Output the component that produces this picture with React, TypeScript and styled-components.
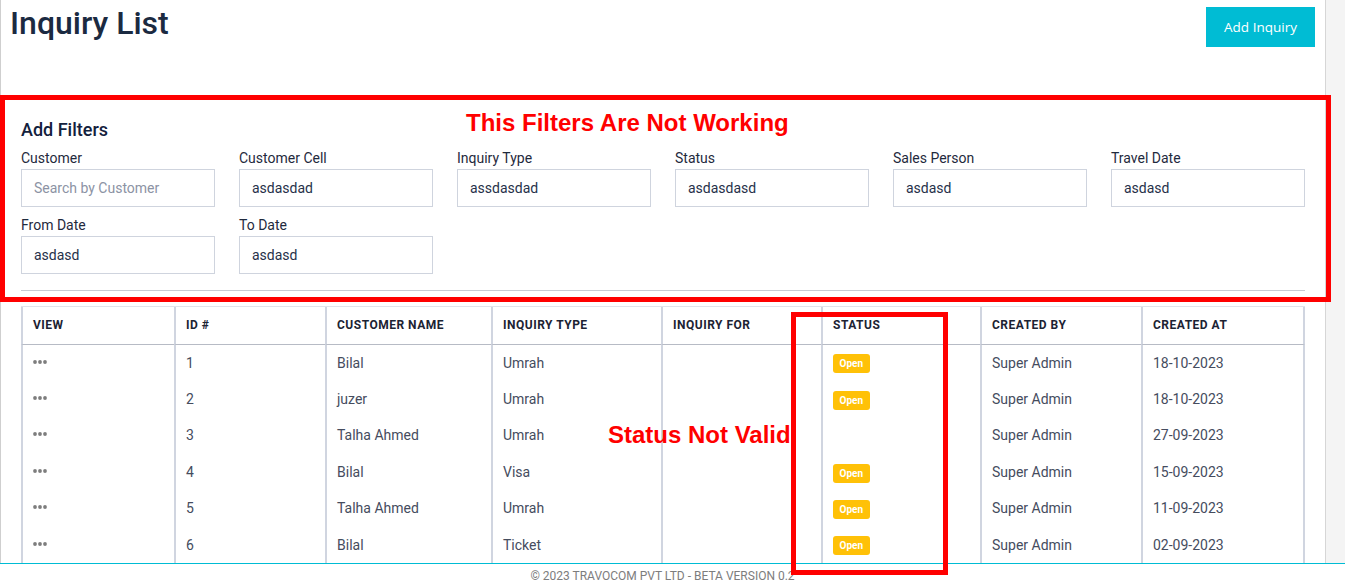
import React from "react";
import styled, { createGlobalStyle } from "styled-components";

const GlobalStyle = createGlobalStyle`
  html, body { margin: 0; padding: 0; background: #fff; }
  body { font-family: Roboto, "Noto Sans", Arial, sans-serif; }
  *, *::before, *::after { box-sizing: border-box; }
`;

const Page = styled.div`
  position: relative;
  width: 1345px;
`;

const Body = styled.div`
  display: flex;
  align-items: stretch;
`;

const Panel = styled.main`
  width: 1326px;
  background: #fff;
  border-left: 1px solid #cfcfcf;
  border-right: 1px solid #d6d6d6;
`;

const Gutter = styled.div`
  flex: 1;
  background: #f4f4f4;
`;

const Header = styled.header`
  display: flex;
  justify-content: space-between;
  align-items: flex-start;
  height: 97px;
  padding: 4px 10px 0 9px;
`;

const Title = styled.h1`
  margin: 0;
  font-size: 32px;
  line-height: 38px;
  font-weight: 500;
  color: #1b2a41;
`;

const PrimaryButton = styled.button`
  margin-top: 3px;
  height: 40px;
  width: 109px;
  padding: 0;
  border: none;
  background: #00bcd4;
  color: #fff;
  font-family: "Open Sans", Arial, sans-serif;
  font-size: 13.5px;
  cursor: pointer;
`;

const Filters = styled.section`
  padding: 22px 20px 0 20px;
`;

const FilterTitle = styled.h2`
  margin: 0 0 7px;
  font-size: 18px;
  line-height: 21.6px;
  font-weight: 500;
  color: #13213d;
`;

const FilterGrid = styled.div`
  display: grid;
  grid-template-columns: repeat(6, 194px);
  column-gap: 24px;
  row-gap: 8px;
`;

const Field = styled.label`
  display: flex;
  flex-direction: column;
`;

const FieldLabel = styled.span`
  font-size: 14px;
  line-height: 21px;
  color: #1f2a3d;
`;

const TextInput = styled.input`
  width: 100%;
  height: 38px;
  padding: 0 12px;
  border: 1px solid #cfd4de;
  border-radius: 0;
  font-family: Roboto, Arial, sans-serif;
  font-size: 14px;
  color: #27314a;
  background: #fff;
  outline: none;
  &::placeholder { color: #8c93a4; }
`;

const Divider = styled.hr`
  margin: 16px 0 15px;
  border: 0;
  border-top: 1px solid #c7cbd4;
`;

const TableWrap = styled.section`
  padding: 0 20px;
`;

const Table = styled.table`
  width: 1284px;
  border-collapse: separate;
  border-spacing: 0;
  table-layout: fixed;
  border-top: 1px solid #e0e3ea;
`;

const Th = styled.th<{ $w: number }>`
  width: ${(p) => p.$w}px;
  padding: 11.5px 10px;
  text-align: left;
  font-size: 12px;
  line-height: 14.06px;
  font-weight: 700;
  letter-spacing: 0.5px;
  text-transform: uppercase;
  color: #1c2333;
  border-left: 2px solid #d0d5e0;
  border-bottom: 1px solid #b7bbc5;
  &:last-child { border-right: 2px solid #d0d5e0; }
`;

const Td = styled.td`
  padding: 10px 10px;
  font-size: 14px;
  line-height: 16.4px;
  color: #454c5e;
  border-left: 2px solid #d0d5e0;
  white-space: nowrap;
  &:last-child { border-right: 2px solid #d0d5e0; }
`;

const Dots = styled.svg`
  width: 14px;
  height: 4px;
  vertical-align: 4px;
  fill: #7d7d7d;
`;

const Badge = styled.span`
  display: inline-block;
  height: 19px;
  margin: -3px 0;
  padding: 0 6.5px;
  line-height: 19px;
  font-size: 10px;
  font-weight: 700;
  color: #fff;
  background: #ffc107;
  border-radius: 3px;
  vertical-align: middle;
`;

const Footer = styled.footer`
  border-top: 1px solid #00bcd4;
  padding: 3px 20px 0 0;
  text-align: center;
  font-size: 12px;
  line-height: 18px;
  color: #7d7d7d;
  background: #fff;
`;

const MarkBox = styled.div<{ $x: number; $y: number; $w: number; $h: number }>`
  position: absolute;
  left: ${(p) => p.$x}px;
  top: ${(p) => p.$y}px;
  width: ${(p) => p.$w}px;
  height: ${(p) => p.$h}px;
  border: 5px solid #ff0000;
  pointer-events: none;
`;

const MarkText = styled.div<{ $x: number; $y: number }>`
  position: absolute;
  left: ${(p) => p.$x}px;
  top: ${(p) => p.$y}px;
  font-family: "Liberation Sans", Arial, sans-serif;
  font-weight: 700;
  font-size: 24px;
  line-height: 24px;
  color: #ff0000;
  white-space: nowrap;
  pointer-events: none;
`;

const filters: { label: string; value?: string; placeholder?: string }[] = [
  { label: "Customer", placeholder: "Search by Customer" },
  { label: "Customer Cell", value: "asdasdad" },
  { label: "Inquiry Type", value: "assdasdad" },
  { label: "Status", value: "asdasdasd" },
  { label: "Sales Person", value: "asdasd" },
  { label: "Travel Date", value: "asdasd" },
  { label: "From Date", value: "asdasd" },
  { label: "To Date", value: "asdasd" },
];

const columns: { title: string; w: number }[] = [
  { title: "View", w: 153 },
  { title: "ID #", w: 151 },
  { title: "Customer Name", w: 166 },
  { title: "Inquiry Type", w: 170 },
  { title: "Inquiry For", w: 160 },
  { title: "Status", w: 159 },
  { title: "Created By", w: 161 },
  { title: "Created At", w: 164 },
];

const rows = [
  { id: 1, name: "Bilal", type: "Umrah", open: true, date: "18-10-2023" },
  { id: 2, name: "juzer", type: "Umrah", open: true, date: "18-10-2023" },
  { id: 3, name: "Talha Ahmed", type: "Umrah", open: false, date: "27-09-2023" },
  { id: 4, name: "Bilal", type: "Visa", open: true, date: "15-09-2023" },
  { id: 5, name: "Talha Ahmed", type: "Umrah", open: true, date: "11-09-2023" },
  { id: 6, name: "Bilal", type: "Ticket", open: true, date: "02-09-2023" },
];

export default function App() {
  return (
    <Page>
      <GlobalStyle />
      <Body>
        <Panel>
          <Header>
            <Title>Inquiry List</Title>
            <PrimaryButton>Add Inquiry</PrimaryButton>
          </Header>
          <Filters>
            <FilterTitle>Add Filters</FilterTitle>
            <FilterGrid>
              {filters.map((f) => (
                <Field key={f.label}>
                  <FieldLabel>{f.label}</FieldLabel>
                  <TextInput defaultValue={f.value} placeholder={f.placeholder} />
                </Field>
              ))}
            </FilterGrid>
            <Divider />
          </Filters>
          <TableWrap>
            <Table>
              <thead>
                <tr>
                  {columns.map((c) => (
                    <Th key={c.title} $w={c.w}>{c.title}</Th>
                  ))}
                </tr>
              </thead>
              <tbody>
                {rows.map((r) => (
                  <tr key={r.id}>
                    <Td>
                      <Dots viewBox="0 0 14 4">
                        <circle cx="2" cy="2" r="1.9" />
                        <circle cx="7" cy="2" r="1.9" />
                        <circle cx="12" cy="2" r="1.9" />
                      </Dots>
                    </Td>
                    <Td>{r.id}</Td>
                    <Td>{r.name}</Td>
                    <Td>{r.type}</Td>
                    <Td></Td>
                    <Td>{r.open ? <Badge>Open</Badge> : null}</Td>
                    <Td>Super Admin</Td>
                    <Td>{r.date}</Td>
                  </tr>
                ))}
              </tbody>
            </Table>
          </TableWrap>
        </Panel>
        <Gutter />
      </Body>
      <Footer>© 2023 TRAVOCOM PVT LTD - BETA VERSION 0.2</Footer>

      <MarkBox $x={0} $y={95} $w={1331} $h={207} />
      <MarkText $x={466} $y={111}>This Filters Are Not Working</MarkText>
      <MarkBox $x={791} $y={312} $w={157} $h={263} />
      <MarkText $x={608} $y={423}>Status Not Valid</MarkText>
    </Page>
  );
}
